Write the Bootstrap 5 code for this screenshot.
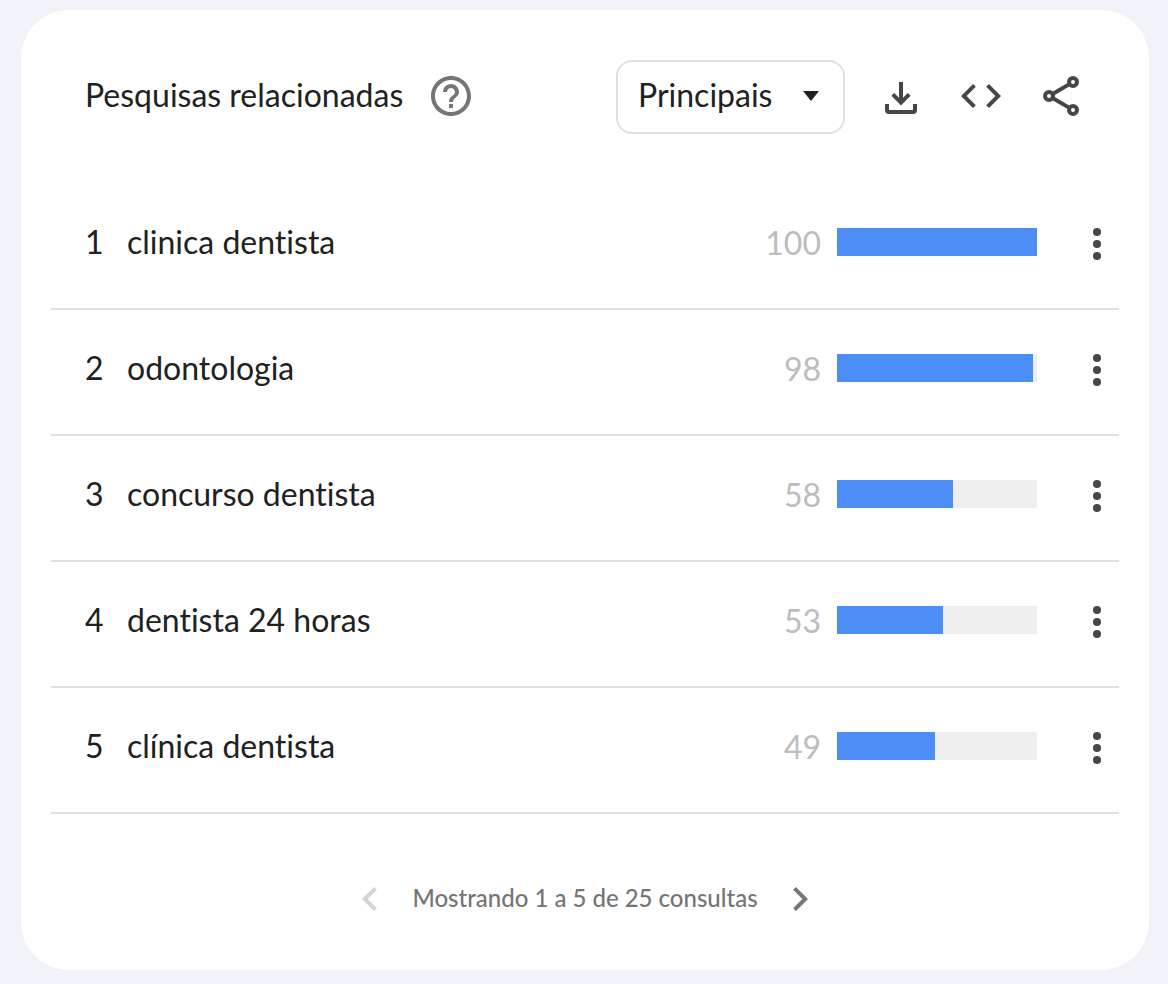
<!DOCTYPE html>
<html lang="pt-BR">
<head>
<meta charset="utf-8">
<meta name="viewport" content="width=device-width, initial-scale=1">
<title>Pesquisas relacionadas</title>
<link href="https://cdn.jsdelivr.net/npm/bootstrap@5.3.0/dist/css/bootstrap.min.css" rel="stylesheet">
<style>
  body { background: #f2f3f8; color: #212121; font-family: Lato, "Open Sans", sans-serif; font-size: 32px; line-height: 40px; font-variant-ligatures: none; }
  .panel { margin: 10px 19px 14px 21px; padding: 50px 30px 47px; border-radius: 48px; }
  .panel-head { padding: 0 34px; margin-bottom: 49px; gap: 32px; }
  .panel-head .icon-btn { margin-bottom: 2px; }
  .panel-title { font-size: 32px; line-height: 40px; font-weight: 400; padding-bottom: 4px; }
  .icon-btn { width: 48px; height: 48px; color: #444746; line-height: 1; }
  .icon-btn svg { width: 48px; height: 48px; display: block; }
  .icon-btn.muted, .pager { color: #757575; }
  .icon-btn:disabled { color: #757575; opacity: .3; border: 0; }
  .sort-select { width: 229px; height: 74px; padding: 0 60px 4px 20px; border: 2px solid #e0e0e0; border-radius: 16px; color: #212121; font-size: 32px; line-height: 40px;
    background-image: url("data:image/svg+xml,%3Csvg xmlns='http://www.w3.org/2000/svg' viewBox='0 0 16 10'%3E%3Cpath fill='%23212121' d='M0 0h16L8 10z'/%3E%3C/svg%3E");
    background-size: 16px 10px; background-position: right 24px top 29px; }
  .queries { color: inherit; }
  .queries td, .queries th { height: 126px; padding: 0 0 8px; border-bottom: 2px solid #e0e0e0; font-weight: 400; background: none; color: inherit; }
  .queries .rank { width: 76px; padding-left: 34px; }
  .queries .score { width: 100px; padding: 0 16px 6px 0; color: #bdbdbd; }
  .queries .meter { width: 200px; }
  .queries .more { width: 82px; padding-bottom: 4px; }
  .more .icon-btn { width: 44px; }
  .more svg { margin-left: -2px; }
  .progress { height: 28px; border-radius: 0; background: #eee; }
  .progress-bar { background: #4d8df6; }
  .pager { margin-top: 61px; gap: 18px; font-size: 24px; line-height: 32px; font-weight: 500; }
  .pager span { padding-bottom: 2px; }
</style>
</head>
<body>
<main class="panel bg-white">
  <header class="panel-head d-flex align-items-center">
    <div class="d-flex align-items-center gap-4 me-auto">
      <h1 class="panel-title mb-0">Pesquisas relacionadas</h1>
      <button type="button" class="btn p-0 border-0 icon-btn muted ms-n1" aria-label="Ajuda">
        <svg viewBox="0 0 24 24" fill="currentColor"><path d="M11 18h2v-2h-2v2zm1-16C6.480 2 2 6.480 2 12s4.480 10 10 10 10-4.480 10-10S17.520 2 12 2zm0 18c-4.410 0-8-3.590-8-8s3.590-8 8-8 8 3.590 8 8-3.590 8-8 8zm0-14c-2.210 0-4 1.790-4 4h2c0-1.100.900-2 2-2s2 .900 2 2c0 2-3 1.750-3 5h2c0-2.250 3-2.500 3-5 0-2.210-1.790-4-4-4z"/></svg>
      </button>
    </div>
    <select class="form-select sort-select shadow-none" aria-label="Ordenar consultas">
      <option selected>Principais</option>
      <option>Em ascensão</option>
    </select>
    <button type="button" class="btn p-0 border-0 icon-btn" aria-label="Baixar CSV">
      <svg viewBox="0 0 24 24" fill="none" stroke="currentColor" stroke-width="2"><path d="M12 5v10M7.900 11.200 12 15.300l4.100-4.100M5 16v3a1 1 0 0 0 1 1h12a1 1 0 0 0 1-1v-3"/></svg>
    </button>
    <button type="button" class="btn p-0 border-0 icon-btn" aria-label="Incorporar">
      <svg viewBox="0 0 24 24" fill="currentColor"><path d="M9.400 16.600 4.800 12l4.600-4.600L8 6l-6 6 6 6 1.400-1.400zm5.200 0 4.600-4.600-4.600-4.600L16 6l6 6-6 6-1.400-1.400z"/></svg>
    </button>
    <button type="button" class="btn p-0 border-0 icon-btn" aria-label="Compartilhar">
      <svg viewBox="0 0 24 24" fill="none" stroke="currentColor" stroke-width="2"><circle cx="18" cy="5" r="2"/><circle cx="6" cy="12" r="2"/><circle cx="18" cy="19" r="2"/><path d="m8 10.900 8-4.700M8 13.100l8 4.700"/></svg>
    </button>
  </header>

  <table class="queries table align-middle mb-0" aria-label="Consultas relacionadas">
    <tbody id="rows"></tbody>
  </table>

  <nav class="pager d-flex justify-content-center align-items-center" aria-label="Paginação">
    <button type="button" class="btn p-0 border-0 icon-btn muted" aria-label="Anterior" disabled>
      <svg viewBox="0 0 24 24" fill="currentColor"><path d="M15.410 7.410 14 6l-6 6 6 6 1.410-1.410L10.830 12z"/></svg>
    </button>
    <span>Mostrando 1 a 5 de 25 consultas</span>
    <button type="button" class="btn p-0 border-0 icon-btn muted" aria-label="Próxima">
      <svg viewBox="0 0 24 24" fill="currentColor"><path d="M10 6 8.590 7.410 13.170 12l-4.580 4.590L10 18l6-6z"/></svg>
    </button>
  </nav>
</main>
<script src="https://cdn.jsdelivr.net/npm/bootstrap@5.3.0/dist/js/bootstrap.bundle.min.js"></script>
<script>
  const queries = [['clinica dentista', 100], ['odontologia', 98], ['concurso dentista', 58], ['dentista 24 horas', 53], ['clínica dentista', 49]];
  document.getElementById('rows').innerHTML = queries.map(([name, score], i) => `
    <tr>
      <td class="rank">${i + 1}</td>
      <th scope="row">${name}</th>
      <td class="score text-end">${score}</td>
      <td class="meter"><div class="progress" role="progressbar" aria-label="${name}" aria-valuenow="${score}" aria-valuemin="0" aria-valuemax="100"><div class="progress-bar" style="width:${score}%"></div></div></td>
      <td class="more"><button type="button" class="btn p-0 border-0 icon-btn d-block ms-auto" aria-label="Mais opções para ${name}"><svg viewBox="0 0 24 24" fill="currentColor"><circle cx="12" cy="6" r="2"/><circle cx="12" cy="12" r="2"/><circle cx="12" cy="18" r="2"/></svg></button></td>
    </tr>`).join('');
</script>
</body>
</html>
